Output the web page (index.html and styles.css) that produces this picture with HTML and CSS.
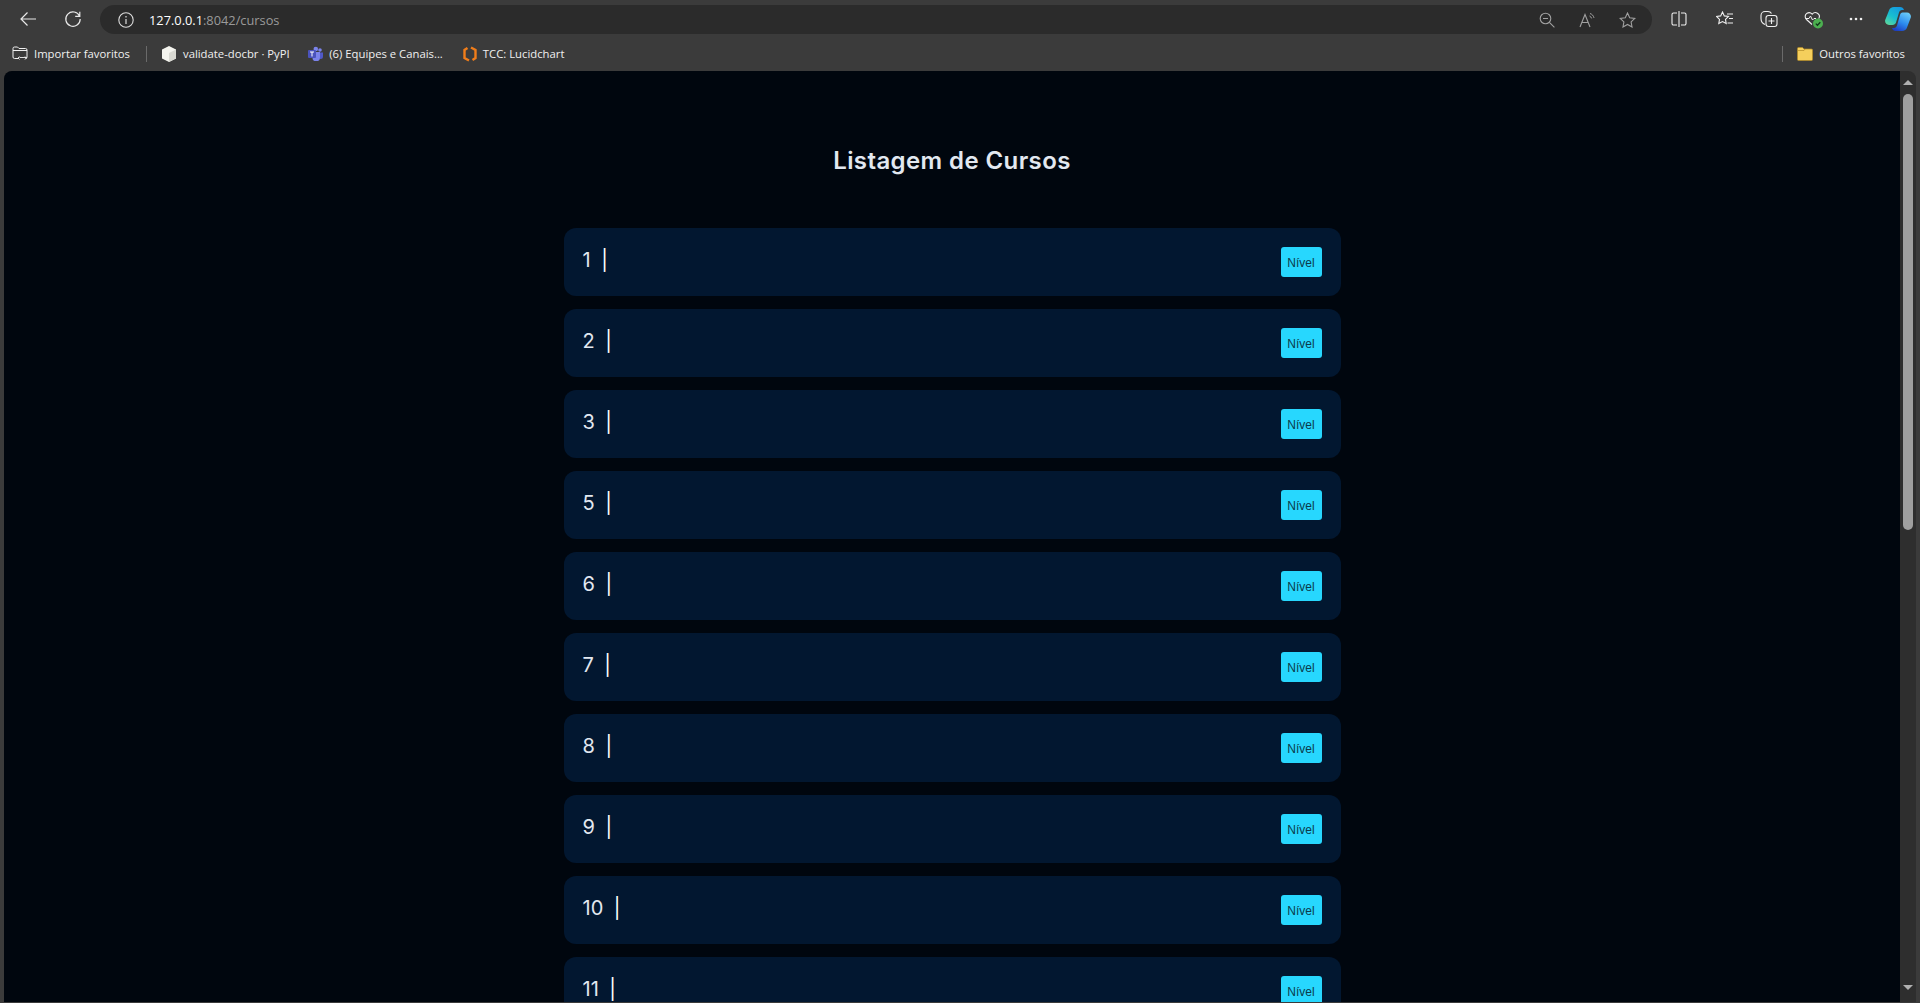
FILE: index.html
```html
<!doctype html>
<html>
	<head>
		<meta charset="utf-8" />
		<title>Listagem de Cursos</title>
		<link rel="stylesheet" href="styles.css">
	</head>
	<body>
		<div class="browser">
			<div class="toolbar">
				<svg class="nav_back" width="18" height="16" viewBox="0 0 18 16"><path d="M17 8H2M8.5 1.5 2 8l6.5 6.5" fill="none" stroke="#e8e8e8" stroke-width="1.2"/></svg>
				<svg class="nav_reload" width="18" height="18" viewBox="0 0 18 18"><path d="M15.6 6.2A7.2 7.2 0 1 0 16.2 9M15.8 1.8v4.6h-4.6" fill="none" stroke="#e8e8e8" stroke-width="1.2"/></svg>
				<div class="address">
					<svg class="addr_info" width="16" height="16" viewBox="0 0 16 16"><circle cx="8" cy="8" r="7.2" fill="none" stroke="#dcdcdc" stroke-width="1.1"/><path d="M8 7v5M8 4v1.4" stroke="#dcdcdc" stroke-width="1.2"/></svg>
					<span class="url"><span class="url_host">127.0.0.1</span>:8042/cursos</span>
					<svg class="addr_zoom" width="16" height="16" viewBox="0 0 16 16"><circle cx="6.5" cy="6.5" r="5.3" fill="none" stroke="#a0a0a0" stroke-width="1.1"/><path d="M4 6.5h5M10.4 10.4l5 5" stroke="#a0a0a0" stroke-width="1.1"/></svg>
					<svg class="addr_read" width="17" height="16" viewBox="0 0 17 16"><path d="M1 15 6 2.5 11 15M2.8 10.5h6.4" fill="none" stroke="#a0a0a0" stroke-width="1.1"/><path d="M11 1.5c2 .6 3.5 2.2 4 4.4M10.5 4c1 .4 1.8 1.2 2.1 2.4" fill="none" stroke="#a0a0a0" stroke-width="1"/></svg>
					<svg class="addr_star" width="17" height="16" viewBox="0 0 17 16"><path d="m8.5 1 2.2 4.7 5.1.7-3.7 3.5.9 5.1-4.5-2.5L4 15l.9-5.1L1.2 6.4l5.1-.7z" fill="none" stroke="#a0a0a0" stroke-width="1.1"/></svg>
				</div>
				<svg class="tool_split" width="16" height="16" viewBox="0 0 16 16"><path d="M6 2H2.5A1.5 1.5 0 0 0 1 3.500v9A1.500 1.500 0 0 0 2.500 14H6M10 2h3.500A1.500 1.500 0 0 1 15 3.500v9a1.500 1.500 0 0 1-1.500 1.500H10M8 0v16" fill="none" stroke="#f0f0f0" stroke-width="1.1"/></svg>
				<svg class="tool_favs" width="18" height="16" viewBox="0 0 18 16"><path d="m6.500 1 1.800 3.900 4.200.6-3 2.900.7 4.200-3.700-2-3.700 2 .7-4.200-3-2.900 4.200-.6z" fill="none" stroke="#f0f0f0" stroke-width="1.1"/><path d="M11 3h6M13 7.500h4M11.500 12H17" stroke="#f0f0f0" stroke-width="1.1"/></svg>
				<svg class="tool_coll" width="18" height="18" viewBox="0 0 18 18"><path d="M5 14.500C2.500 13.500 1 11 1 8.500V5.500C1 3 3 1.500 5 1.500h3c1.500 0 2.800.8 3.500 2" fill="none" stroke="#f0f0f0" stroke-width="1.1"/><rect x="6" y="5.500" width="11" height="11" rx="2.500" fill="none" stroke="#f0f0f0" stroke-width="1.1"/><path d="M11.500 8v6M8.500 11h6" stroke="#f0f0f0" stroke-width="1.1"/></svg>
				<svg class="tool_health" width="20" height="20" viewBox="0 0 20 20"><path d="M8 14.500 2.500 9.500C.5 7.500.8 4.500 3 3.200c1.800-1 3.800-.6 5.200 1 1.400-1.600 3.500-2 5.200-1 2 1.200 2.400 3.600 1.300 5.500" fill="none" stroke="#f0f0f0" stroke-width="1.1"/><path d="M1.500 8.500h3.500l1.500-2.500 2 4 1.500-1.500h2" fill="none" stroke="#f0f0f0" stroke-width="1"/><circle cx="14" cy="13.500" r="5" fill="#4caf50"/><path d="m11.800 13.600 1.600 1.600 2.900-3" fill="none" stroke="#12361a" stroke-width="1.300"/></svg>
				<svg class="tool_more" width="14" height="4" viewBox="0 0 14 4"><circle cx="2" cy="2" r="1.300" fill="#f0f0f0"/><circle cx="7" cy="2" r="1.300" fill="#f0f0f0"/><circle cx="12" cy="2" r="1.300" fill="#f0f0f0"/></svg>
				<svg class="tool_copilot" width="26" height="24" viewBox="0 0 26 24">
					<defs>
						<linearGradient id="cop_left" x1="0.8" y1="0" x2="0.1" y2="1"><stop offset="0" stop-color="#1496e0"/><stop offset="0.55" stop-color="#18bfd0"/><stop offset="1" stop-color="#5fd89a"/></linearGradient>
						<linearGradient id="cop_right" x1="0.8" y1="0" x2="0.3" y2="1"><stop offset="0" stop-color="#6ccdf6"/><stop offset="0.55" stop-color="#2c8cf0"/><stop offset="1" stop-color="#1d3fc4"/></linearGradient>
					</defs>
					<path d="M9 0h6c2 0 3.500 1.200 4 3h-2c-1.500 0-2.500 1-3 2.500l-3 10c-.5 1.500-1.800 2.500-3.500 2.500H4c-2.600 0-4.500-2.400-3.800-5L4 3.500C4.600 1.400 6.500 0 9 0z" fill="url(#cop_left)"/>
					<path d="M17.500 5.500H22c2.600 0 4.500 2.400 3.800 5L22 20.500c-.6 2-2.500 3.500-5 3.500h-6c-2 0-3.500-1.200-4-3h2c1.500 0 2.500-1 3-2.500l3-10.500c.4-1.500 1.200-2.500 2.500-2.500z" fill="url(#cop_right)"/>
				</svg>
			</div>
			<div class="bookmarks">
				<div class="bm_item bm_import">
					<svg width="16" height="15" viewBox="0 0 16 15"><path d="M6 12.500H2.500A1.500 1.500 0 0 1 1 11V2.500A1.500 1.500 0 0 1 2.500 1H5.500l1.500 1.500h6.500A1.500 1.500 0 0 1 15 4v7a1.500 1.500 0 0 1-1.500 1.500M1 4.500h14" fill="none" stroke="#f0f0f0" stroke-width="1"/><path d="M7.500 11.500h7M7.500 13.500l-1.500-1.500 1.500-1.500M13 10.500l1.500 1.500-1.500 1.500" fill="none" stroke="#f0f0f0" stroke-width="0.900"/></svg>
					<span>Importar favoritos</span>
				</div>
				<div class="bm_sep"></div>
				<div class="bm_item bm_pypi">
					<svg width="16" height="16" viewBox="0 0 16 16"><path d="M8 0 15 3.500v9L8 16 1 12.500v-9z" fill="#f4f4ee"/><path d="M8 7v9l7-3.500v-9z" fill="#d9d9d2"/></svg>
					<span>validate-docbr · PyPI</span>
				</div>
				<div class="bm_item bm_teams">
					<svg width="15" height="15" viewBox="0 0 15 15"><circle cx="12" cy="4" r="1.800" fill="#7b83eb"/><path d="M9.500 6.500H15v4a2.500 2.500 0 0 1-5 0z" fill="#5059c9"/><circle cx="7.800" cy="3" r="2.300" fill="#7b83eb"/><path d="M4 6h8v5.500a3.800 3.800 0 0 1-7.600 0z" fill="#7b83eb"/><rect x="0" y="4" width="8" height="8" rx="1" fill="#4b53bc"/><path d="M2 6h4M4 6v4.500" stroke="#fff" stroke-width="1"/></svg>
					<span>(6) Equipes e Canais...</span>
				</div>
				<div class="bm_item bm_lucid">
					<svg width="14" height="16" viewBox="0 0 14 16"><path d="M8 1.500 12.500 4v8L9.500 14M6 14.500 1.500 12V4L4.500 2" fill="none" stroke="#f07d1a" stroke-width="2.400"/></svg>
					<span>TCC: Lucidchart</span>
				</div>
				<div class="bm_sep bm_sep_right"></div>
				<div class="bm_item bm_other">
					<svg width="16" height="14" viewBox="0 0 16 14"><path d="M.500 1.500A1 1 0 0 1 1.500.500h4l1.500 1.500h7.500a1 1 0 0 1 1 1v9.500a1 1 0 0 1-1 1h-13a1 1 0 0 1-1-1z" fill="#f5cf5c" stroke="#b38b26" stroke-width="0.700"/><path d="M.500 3.500H7L8 2" fill="none" stroke="#b38b26" stroke-width="0.700"/></svg>
					<span>Outros favoritos</span>
				</div>
			</div>
			<div class="viewport">
				<div class="page">
					<h1 class="page_title">Listagem de Cursos</h1>
					<ul class="course_list">
						<li class="course"><span class="course_name">1<span class="course_bar">|</span></span><button class="course_btn">Nível</button></li>
						<li class="course"><span class="course_name">2<span class="course_bar">|</span></span><button class="course_btn">Nível</button></li>
						<li class="course"><span class="course_name">3<span class="course_bar">|</span></span><button class="course_btn">Nível</button></li>
						<li class="course"><span class="course_name">5<span class="course_bar">|</span></span><button class="course_btn">Nível</button></li>
						<li class="course"><span class="course_name">6<span class="course_bar">|</span></span><button class="course_btn">Nível</button></li>
						<li class="course"><span class="course_name">7<span class="course_bar">|</span></span><button class="course_btn">Nível</button></li>
						<li class="course"><span class="course_name">8<span class="course_bar">|</span></span><button class="course_btn">Nível</button></li>
						<li class="course"><span class="course_name">9<span class="course_bar">|</span></span><button class="course_btn">Nível</button></li>
						<li class="course"><span class="course_name">10<span class="course_bar">|</span></span><button class="course_btn">Nível</button></li>
						<li class="course"><span class="course_name">11<span class="course_bar">|</span></span><button class="course_btn">Nível</button></li>
					</ul>
				</div>
				<div class="scrollbar">
					<div class="scroll_up"></div>
					<div class="scroll_thumb"></div>
					<div class="scroll_down"></div>
				</div>
			</div>
		</div>
	</body>
</html>
```

FILE: styles.css
```css
html, body {
	margin : 0;
	height : 100%;
	overflow : hidden;
	background-color : #3b3b3b;
}
.browser {
	display : flex;
	flex-direction : column;
	height : 100vh;
	font-family : "Open Sans", "Liberation Sans", sans-serif;
}
.toolbar {
	display : flex;
	align-items : center;
	height : 38px;
	flex : none;
	padding-left : 19px;
}
.nav_back {
	margin-right : 27px;
}
.nav_reload {
	margin-right : 18px;
}
.address {
	display : flex;
	align-items : center;
	width : 1552px;
	height : 29px;
	margin-top : 1px;
	border-radius : 15px;
	background-color : #2b2b2b;
	box-sizing : border-box;
	padding-left : 18px;
	padding-right : 16px;
}
.addr_info {
	margin-right : 15px;
}
.url {
	flex : 1;
	font-size : 12.800px;
	color : #9a9a9a;
}
.url_host {
	color : #ffffff;
}
.addr_zoom {
	margin-right : 24.500px;
}
.addr_read {
	margin-right : 23px;
}
.tool_split {
	margin-left : 19px;
}
.tool_favs {
	margin-left : 29px;
}
.tool_coll {
	margin-left : 26px;
}
.tool_health {
	margin-left : 26px;
	margin-top : 2px;
}
.tool_more {
	margin-left : 25px;
}
.tool_copilot {
	margin-left : 22px;
}
.bookmarks {
	display : flex;
	align-items : center;
	height : 33px;
	flex : none;
	box-sizing : border-box;
	padding-left : 12px;
	padding-bottom : 2px;
	font-size : 11.300px;
	color : #f0f0f0;
}
.bm_item {
	display : flex;
	align-items : center;
	white-space : nowrap;
}
.bm_item svg {
	margin-right : 6px;
}
.bm_sep {
	width : 1px;
	height : 16px;
	margin : 0 14px 0 16px;
	background-color : #6a6a6a;
}
.bm_teams {
	margin-left : 18.500px;
}
.bm_lucid {
	margin-left : 20px;
}
.bm_sep_right {
	margin-left : auto;
}
.bm_other {
	margin-right : 15px;
}
.viewport {
	display : flex;
	flex : 1;
	min-height : 0;
	margin : 0 4px 1px 4px;
	border-radius : 8px 8px 0 0;
	overflow : hidden;
	background-color : #2e2e2e;
}
.page {
	flex : 1;
	min-width : 0;
	overflow : hidden;
	background-color : #00060e;
}
.page_title {
	margin : 74px 0 0 0;
	height : 83px;
	font-family : "Inter", "Liberation Sans", sans-serif;
	font-size : 24px;
	font-weight : 600;
	letter-spacing : 0.400px;
	line-height : 32px;
	text-align : center;
	color : #e2e8f0;
}
.course_list {
	list-style : none;
	width : 777px;
	margin : 0 auto;
	padding : 0;
}
.course {
	display : flex;
	align-items : center;
	justify-content : space-between;
	height : 68px;
	margin-bottom : 13px;
	padding : 0 19px;
	box-sizing : border-box;
	border-radius : 12px;
	background-color : #021730;
}
.course_name {
	font-family : "Inter", "Liberation Sans", sans-serif;
	font-size : 20px;
	line-height : 24px;
	margin-top : -5px;
	color : #e2e8f0;
}
.course_bar {
	margin-left : 10.500px;
	color : #ffffff;
}
.course_btn {
	width : 41px;
	height : 30px;
	padding : 1px 0 0 0;
	border : 0;
	border-radius : 3px;
	font-family : "Liberation Sans", Arial, sans-serif;
	font-size : 12px;
	color : #0b3a4a;
	background-color : #27d7fe;
}
.scrollbar {
	display : flex;
	flex-direction : column;
	align-items : center;
	width : 16px;
	flex : none;
}
.scroll_up {
	width : 0;
	height : 0;
	margin-top : 9px;
	border-left : 5px solid transparent;
	border-right : 5px solid transparent;
	border-bottom : 5px solid #b0b0b0;
}
.scroll_thumb {
	width : 10px;
	height : 436px;
	margin-top : 9px;
	border-radius : 5px;
	background-color : #9f9f9f;
}
.scroll_down {
	width : 0;
	height : 0;
	margin-top : auto;
	margin-bottom : 12px;
	border-left : 5px solid transparent;
	border-right : 5px solid transparent;
	border-top : 5px solid #b0b0b0;
}
```
